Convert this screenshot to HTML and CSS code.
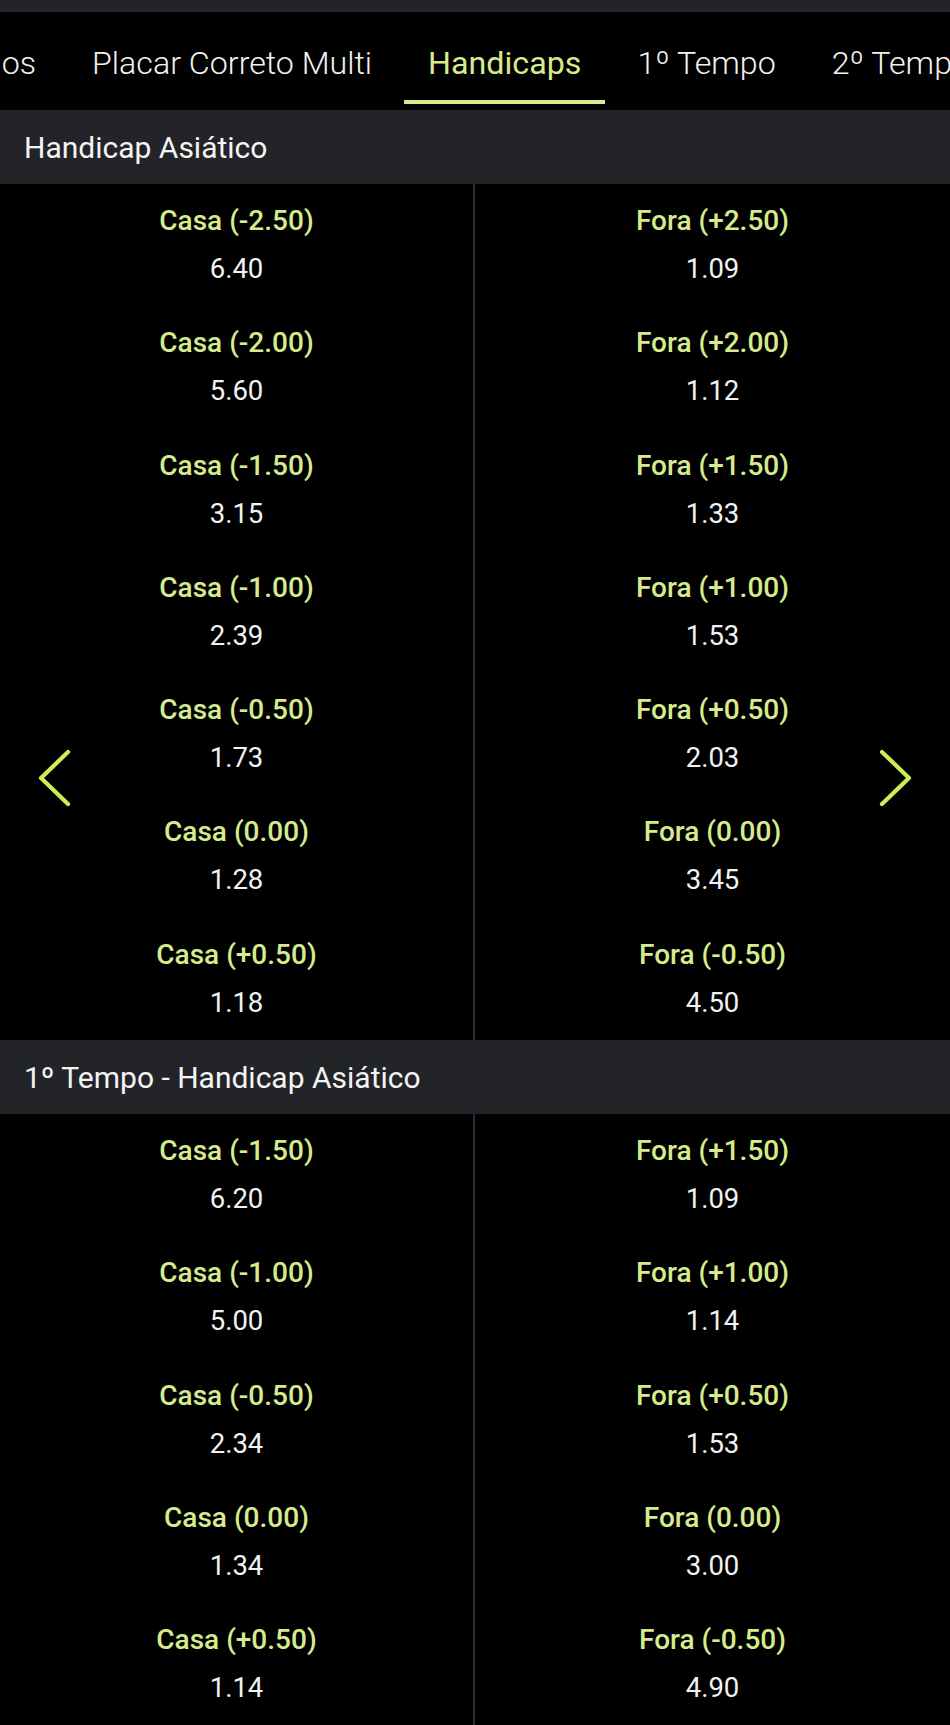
FILE: index.html
```html
<!DOCTYPE html>
<html lang="pt-BR">
<head>
<meta charset="utf-8">
<title>Handicaps</title>
<link rel="stylesheet" href="styles.css">
</head>
<body>
<div class="page">
  <div class="top-strip"></div>
  <nav class="tabs">
    <div class="tab tab-partial"><span class="tab-clip">Escanteios</span></div>
    <div class="tab">Placar Correto Multi</div>
    <div class="tab active">Handicaps</div>
    <div class="tab">1º Tempo</div>
    <div class="tab">2º Tempo</div>
  </nav>

  <section class="market">
    <header class="market-head">Handicap Asiático</header>
    <div class="market-body">
      <div class="col">
        <div class="odd"><span class="lbl">Casa (-2.50)</span><span class="val">6.40</span></div>
        <div class="odd"><span class="lbl">Casa (-2.00)</span><span class="val">5.60</span></div>
        <div class="odd"><span class="lbl">Casa (-1.50)</span><span class="val">3.15</span></div>
        <div class="odd"><span class="lbl">Casa (-1.00)</span><span class="val">2.39</span></div>
        <div class="odd"><span class="lbl">Casa (-0.50)</span><span class="val">1.73</span></div>
        <div class="odd"><span class="lbl">Casa (0.00)</span><span class="val">1.28</span></div>
        <div class="odd"><span class="lbl">Casa (+0.50)</span><span class="val">1.18</span></div>
      </div>
      <div class="col">
        <div class="odd"><span class="lbl">Fora (+2.50)</span><span class="val">1.09</span></div>
        <div class="odd"><span class="lbl">Fora (+2.00)</span><span class="val">1.12</span></div>
        <div class="odd"><span class="lbl">Fora (+1.50)</span><span class="val">1.33</span></div>
        <div class="odd"><span class="lbl">Fora (+1.00)</span><span class="val">1.53</span></div>
        <div class="odd"><span class="lbl">Fora (+0.50)</span><span class="val">2.03</span></div>
        <div class="odd"><span class="lbl">Fora (0.00)</span><span class="val">3.45</span></div>
        <div class="odd"><span class="lbl">Fora (-0.50)</span><span class="val">4.50</span></div>
      </div>
      <svg class="arrow arrow-left" width="40" height="66" viewBox="0 0 40 66">
        <polyline points="34,7 7,33 34,59" fill="none" stroke="#cdec5a" stroke-width="4.2" stroke-linecap="round" stroke-linejoin="round"/>
      </svg>
      <svg class="arrow arrow-right" width="40" height="66" viewBox="0 0 40 66">
        <polyline points="6,7 33,33 6,59" fill="none" stroke="#cdec5a" stroke-width="4.2" stroke-linecap="round" stroke-linejoin="round"/>
      </svg>
    </div>
  </section>

  <section class="market">
    <header class="market-head">1º Tempo - Handicap Asiático</header>
    <div class="market-body">
      <div class="col">
        <div class="odd"><span class="lbl">Casa (-1.50)</span><span class="val">6.20</span></div>
        <div class="odd"><span class="lbl">Casa (-1.00)</span><span class="val">5.00</span></div>
        <div class="odd"><span class="lbl">Casa (-0.50)</span><span class="val">2.34</span></div>
        <div class="odd"><span class="lbl">Casa (0.00)</span><span class="val">1.34</span></div>
        <div class="odd"><span class="lbl">Casa (+0.50)</span><span class="val">1.14</span></div>
      </div>
      <div class="col">
        <div class="odd"><span class="lbl">Fora (+1.50)</span><span class="val">1.09</span></div>
        <div class="odd"><span class="lbl">Fora (+1.00)</span><span class="val">1.14</span></div>
        <div class="odd"><span class="lbl">Fora (+0.50)</span><span class="val">1.53</span></div>
        <div class="odd"><span class="lbl">Fora (0.00)</span><span class="val">3.00</span></div>
        <div class="odd"><span class="lbl">Fora (-0.50)</span><span class="val">4.90</span></div>
      </div>
    </div>
  </section>
</div>
</body>
</html>
```

FILE: styles.css
```css
html, body {
  margin: 0;
  padding: 0;
  background: #000;
}

body {
  font-family: Roboto, "Liberation Sans", Arial, sans-serif;
  color: #f2f2f2;
}

.page {
  width: 950px;
  height: 1725px;
  overflow: hidden;
  background: #000;
}

.top-strip {
  height: 12px;
  background: #222428;
}

.tabs {
  height: 98px;
  box-sizing: border-box;
  padding-bottom: 6px;
  display: flex;
  align-items: flex-start;
  gap: 8px;
  overflow: hidden;
  white-space: nowrap;
  background: #000;
}

.tab {
  flex: none;
  padding: 31px 24px 17px;
  font-size: 32.2px;
  line-height: 40px;
  font-weight: 300;
  color: #f2f2f2;
  border-bottom: 4px solid transparent;
}

.tab.active {
  color: #d6ec8c;
  border-bottom-color: #d6ec8c;
  font-weight: 400;
}

.tab-partial {
  width: 36px;
  padding-left: 0;
  display: flex;
  justify-content: flex-end;
  overflow: hidden;
}

.tab-clip {
  flex: none;
}

.market-head {
  height: 74px;
  display: flex;
  align-items: center;
  padding-left: 24px;
  background: #222428;
  font-size: 30px;
  font-weight: 400;
  color: #f4f4f4;
}

.market-body {
  position: relative;
  display: grid;
  grid-template-columns: 475px 1fr;
}

.col:first-child {
  border-right: 2px solid #2c2e31;
}

.odd {
  height: 122.3px;
  box-sizing: border-box;
  padding-top: 21px;
  display: flex;
  flex-direction: column;
  align-items: center;
  gap: 16px;
}

.lbl {
  font-size: 28px;
  line-height: 32px;
  font-weight: 500;
  color: #d6ec8c;
}

.val {
  font-size: 27.5px;
  line-height: 32px;
  font-weight: 400;
  color: #f2f2f2;
}

.arrow {
  position: absolute;
  top: 561px;
}

.arrow-left {
  left: 34px;
}

.arrow-right {
  left: 876px;
}
```
